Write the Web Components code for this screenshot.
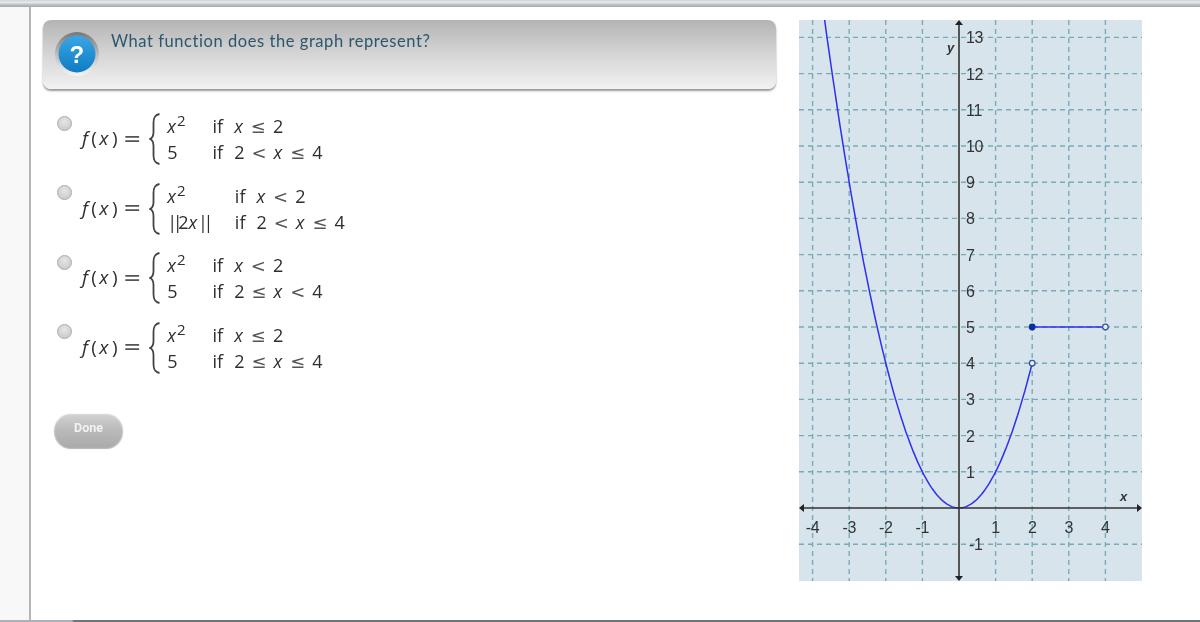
<!DOCTYPE html>
<html>
<head>
<meta charset="utf-8">
<style>
html,body{margin:0;height:100%;background:#fff}
body{font-family:"Lato","Open Sans",sans-serif;overflow:hidden}
</style>
</head>
<body>
<quiz-page>
  <question-banner>What function does the graph represent?</question-banner>
  <piece-option second="5" first-cond="x ≤ 2" second-cond="2 &lt; x ≤ 4"></piece-option>
  <piece-option second="||2x||" first-cond="x &lt; 2" second-cond="2 &lt; x ≤ 4"></piece-option>
  <piece-option second="5" first-cond="x &lt; 2" second-cond="2 ≤ x &lt; 4"></piece-option>
  <piece-option second="5" first-cond="x ≤ 2" second-cond="2 ≤ x ≤ 4"></piece-option>
  <done-button>Done</done-button>
  <function-graph slot="graph"></function-graph>
</quiz-page>
<script>
(()=>{
  class QuizPage extends HTMLElement{
    connectedCallback(){
      this.attachShadow({mode:'open'}).innerHTML=`<style>
:host{display:flex;flex-direction:column;height:622px}
.top{height:7px;flex:none;background:linear-gradient(#cfd5da,#e6e8ea 35%,#c4c6c8 60%,#a4a6a8)}
.row{flex:1;display:flex;min-height:0}
.strip{width:29px;flex:none;background:#f8f8f8;border-right:2px solid #b4b6b8}
.main{flex:1;display:flex;gap:23px;padding-top:13px;min-width:0}
.quiz{width:733px;margin-left:12px;flex:none;display:flex;flex-direction:column}
.opts{display:flex;flex-direction:column;gap:17.5px;margin-top:24px}
.foot{height:2px;flex:none;background:linear-gradient(90deg,#a8b2b8 0,#a8b2b8 72px,#6f7477 74px,#6f7477)}
</style>
<div class="top"></div>
<div class="row">
  <div class="strip"></div>
  <div class="main">
    <div class="quiz">
      <slot name="banner"></slot>
      <div class="opts"><slot></slot></div>
    </div>
    <slot name="graph"></slot>
  </div>
</div>
<div class="foot"></div>`;
      this.querySelector('question-banner').slot='banner';
    }
  }

  class QuestionBanner extends HTMLElement{
    connectedCallback(){
      this.attachShadow({mode:'open'}).innerHTML=`<style>
:host{display:flex;height:69px;box-sizing:border-box;border-radius:8px;padding:11px 0 0 12px;gap:12px;
  background:linear-gradient(#b4b4b4,#d2d2d2 45%,#f2f2f2);box-shadow:0 2px 2px #989898;
  font-size:16.5px;letter-spacing:.56px;color:#2c566e;filter:blur(.4px)}
svg{flex:none}
span{line-height:20px}
</style>
<svg width="44" height="46" viewBox="0 0 44 46">
  <defs>
    <linearGradient id="r" x1="0" y1="0" x2="0" y2="1"><stop offset="0" stop-color="#777"/><stop offset=".5" stop-color="#bbb"/><stop offset="1" stop-color="#f6f6f6"/></linearGradient>
    <linearGradient id="b" x1="0" y1="0" x2="0" y2="1"><stop offset="0" stop-color="#3aa6e6"/><stop offset="1" stop-color="#0f7cc2"/></linearGradient>
  </defs>
  <circle cx="22" cy="23" r="22" fill="url(#r)"/>
  <circle cx="22" cy="23" r="18.5" fill="url(#b)"/>
  <text x="22" y="32" text-anchor="middle" font-family="Liberation Sans" font-weight="700" font-size="24" fill="#fff">?</text>
</svg>
<span><slot></slot></span>`;
    }
  }

  // x goes italic, relations get the wide math spacing
  const mathify=s=>s.replace(/ /g,'').replace(/</g,'\u0001')
    .replace(/\|\|/g,'\u0002')
    .replace(/x/g,'<i>x</i>')
    .replace(/\u0002/g,'<span class="bar">||</span>')
    .replace(/\u0001/g,'<b class="op">&lt;</b>').replace(/≤/g,'<b class="op">≤</b>');

  class PieceOption extends HTMLElement{
    connectedCallback(){
      const a=n=>mathify(this.getAttribute(n));
      this.attachShadow({mode:'open'}).innerHTML=`<style>
:host{display:flex;height:52px;padding-left:14px;font:18px "Open Sans",sans-serif;color:#2e2e2e;filter:blur(.4px)}
.radio{width:15px;height:15px;flex:none;margin-top:2.5px;border-radius:50%;box-sizing:border-box;
  border:1px solid #aaa;background:radial-gradient(circle at 50% 35%,#e6e6e6,#c4c4c4)}
.lhs{margin:-2px 8px 0 10px;align-self:center;white-space:nowrap;display:flex;align-items:center}
.lhs span{font-size:19px;letter-spacing:2.4px}
.lhs b{font:400 22px "DejaVu Sans",sans-serif;margin-left:3px;color:#555}
.brace{flex:none;margin-right:7px}
.grid{display:grid;grid-template-columns:auto auto;grid-auto-rows:26px;column-gap:26px;align-items:center}
.e{display:flex;gap:11px;white-space:nowrap;align-items:center}
.op{font:400 18px "DejaVu Sans",sans-serif;margin:0 7px;color:#555}
.bar{letter-spacing:-4.5px}
i{padding-right:1px}
sup{font-size:15px;line-height:0;vertical-align:7px;margin-right:1px}
</style>
<span class="radio"></span>
<span class="lhs"><span><i>f</i>(<i>x</i>)</span><b>=</b></span>
<svg class="brace" width="11" height="52" viewBox="0 0 11 52"><path d="M10.5 1C5.5 2 4.5 5 4.5 10V19C4.5 23 3.5 25 1 26C3.5 27 4.5 29 4.5 33V42C4.5 47 5.5 50 10.5 51" fill="none" stroke="#444" stroke-width="1.8"/></svg>
<div class="grid">
  <span><i>x</i><sup>2</sup></span><span class="e"><span>if</span><span>${a('first-cond')}</span></span>
  <span>${a('second')}</span><span class="e"><span>if</span><span>${a('second-cond')}</span></span>
</div>`;
    }
  }

  class DoneButton extends HTMLElement{
    connectedCallback(){
      this.attachShadow({mode:'open'}).innerHTML=`<style>
:host{display:flex;justify-content:center;width:69px;height:35px;box-sizing:border-box;margin:23px 0 0 11px;padding-top:6px;
  border-radius:17px;background:linear-gradient(#d2d2d2,#bababa 45%,#a9a9a9);box-shadow:inset 0 0 2px #eee,0 0 1px #bbb;
  color:#f2f2f2;font:700 12.5px "Roboto",sans-serif;filter:blur(.4px)}
</style><slot></slot>`;
    }
  }

  // graph is drawn from math coords, origin at 160,488 inside the panel
  class FunctionGraph extends HTMLElement{
    connectedCallback(){
      const ox=160,oy=488,ux=36.6,uy=36.2,W=343,H=561;
      const X=v=>ox+v*ux,Y=v=>oy-v*uy;
      let g='';
      for(let i=-4;i<=4;i++) if(i) g+=`<line x1="${X(i)}" y1="0" x2="${X(i)}" y2="${H}"/>`;
      for(let i=-1;i<=13;i++) if(i) g+=`<line x1="0" y1="${Y(i)}" x2="${W}" y2="${Y(i)}"/>`;
      let t='';
      for(let i=-4;i<=4;i++) if(i) t+=`<text x="${X(i)}" y="${oy+25}" text-anchor="middle">${i}</text>`;
      for(let i=-1;i<=13;i++) if(i) t+=`<text x="${ox+(i<0?10:7)}" y="${Y(i)+6}">${i}</text>`;
      let p='';
      for(let v=-3.7;v<=2.0001;v+=.05) p+=(p?'L':'M')+X(v).toFixed(1)+' '+Y(v*v).toFixed(1);
      this.attachShadow({mode:'open'}).innerHTML=`<style>
:host{display:block;width:${W}px;height:${H}px;flex:none;filter:blur(.4px)}
svg{display:block;background:#d7e4ec}
.grid line{stroke:#78abb7;stroke-width:1.4;stroke-dasharray:5 4}
.lab text{font:16px "Liberation Sans",sans-serif;letter-spacing:-.3px;fill:#333}
.ax{stroke:#333;stroke-width:1.6}
.cur{fill:none;stroke:#2f2ff0;stroke-width:1.5}
</style>
<svg width="${W}" height="${H}" viewBox="0 0 ${W} ${H}">
  <g class="grid">${g}</g>
  <path class="cur" d="${p}"/>
  <path class="cur" d="M${X(2)} ${Y(5)}H${X(4)}"/>
  <circle cx="${X(2)}" cy="${Y(4)}" r="2.8" fill="#e8f0f6" stroke="#39569c" stroke-width="1.3"/>
  <circle cx="${X(4)}" cy="${Y(5)}" r="2.8" fill="#e8f0f6" stroke="#39569c" stroke-width="1.3"/>
  <circle cx="${X(2)}" cy="${Y(5)}" r="3.4" fill="#0c2fa0"/>
  <line class="ax" x1="${ox}" y1="3" x2="${ox}" y2="${H-3}"/>
  <line class="ax" x1="3" y1="${oy}" x2="${W-3}" y2="${oy}"/>
  <path fill="#222" d="M${ox} 0l-4 5h8zM${ox} ${H}l-4 -5h8zM0 ${oy}l5 -4v8zM${W} ${oy}l-5 -4v8z"/>
  <g class="lab">${t}</g>
  <text x="148" y="32" font-family="Liberation Sans" font-style="italic" font-weight="700" font-size="13" fill="#333">y</text>
  <text x="321" y="481" font-family="Liberation Sans" font-style="italic" font-weight="700" font-size="13" fill="#333">x</text>
</svg>`;
    }
  }

  customElements.define('question-banner',QuestionBanner);
  customElements.define('piece-option',PieceOption);
  customElements.define('done-button',DoneButton);
  customElements.define('function-graph',FunctionGraph);
  customElements.define('quiz-page',QuizPage);
})();
</script>
</body>
</html>
